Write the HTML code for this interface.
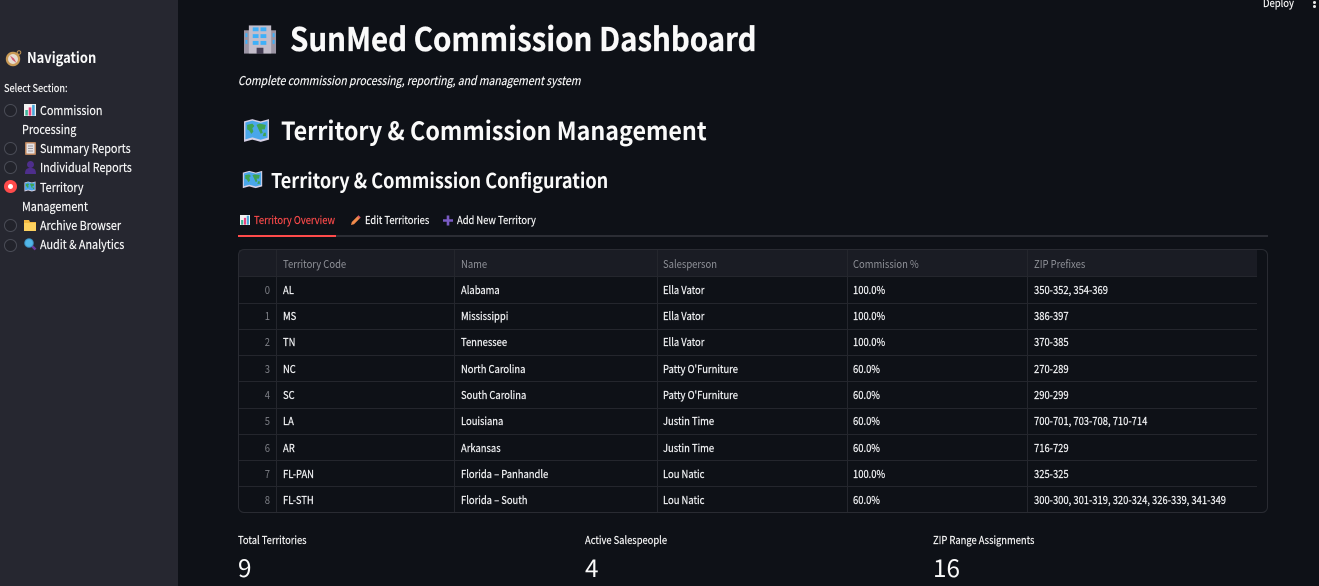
<!DOCTYPE html>
<html lang="en"><head><meta charset="utf-8"><title>SunMed Commission Dashboard</title>
<style>
*{box-sizing:border-box}
html,body{margin:0;padding:0;width:1319px;height:586px;overflow:hidden;background:#0e1117;color:#fafafa;font-family:"Noto Sans CJK JP","Liberation Sans",sans-serif}
.a{position:absolute;white-space:nowrap;line-height:1;transform-origin:left center}
.s{transform:scaleX(.86);-webkit-text-stroke:.15px currentColor}
svg{position:absolute;display:block}
#side{position:absolute;left:0;top:0;width:178px;height:586px;background:#262730}
.nav{font-size:12.400px;font-weight:400;transform:scaleX(.87);-webkit-text-stroke:.15px currentColor}
.radio{position:absolute;left:3.500px;width:13px;height:13px;border-radius:50%;border:1px solid #4a4c56;background:#22232b}
.on{background:#ff4b4b;border:0}
.on:after{content:"";position:absolute;left:4px;top:4px;width:5px;height:5px;border-radius:50%;background:#fff}
.h{font-size:11px;color:#8f9198;transform:scaleX(.86)}
.c{font-size:11px;color:#f4f5f7;transform:scaleX(.856);-webkit-text-stroke:.2px currentColor}
.i{font-size:11px;color:#7d7f86;width:30px;text-align:right;transform:scaleX(.86);transform-origin:right center}
.ln{position:absolute;background:#24262d}
</style></head><body>
<svg width="0" height="0" style="position:absolute"><defs>
<symbol id="map" viewBox="0 0 26 22" preserveAspectRatio="none"><path d="M1 3l8-2 8 2 8-2v18l-8 2-8-2-8 2z" fill="#d6d1e6"/><path d="M2.300 4l6.700-1.700 8 2 6.700-1.700v14.800l-6.700 1.700-8-2-6.700 1.700z" fill="#4aa7ea"/><path d="M4 6l5-1 2 2-2 2 1 3-2 2-2-3-2-1zM13 6l3-1 6 1-1 4-3 0 1 3-2 1-2-4zM20 13l2 0 0 3-3 0z" fill="#3fa452"/></symbol>
<symbol id="chart" viewBox="0 0 14 14"><rect width="14" height="14" fill="#f2f2f2"/><rect x="1.500" y="7" width="3" height="6.500" fill="#3fb59a"/><rect x="5.500" y="4" width="3" height="9.500" fill="#e8417f"/><rect x="9.500" y="1" width="3" height="12.500" fill="#49a6d8"/></symbol>
</defs></svg>

<div id="side">
<svg style="left:5px;top:50px" width="17" height="17" viewBox="0 0 17 17"><circle cx="8" cy="9" r="7.200" fill="#c99a55"/><circle cx="8" cy="9" r="5" fill="#e7ddd0"/><path d="M5 5.500l4 3 2.500 4.500-4-3z" fill="#d0576e"/><circle cx="14" cy="2.500" r="1.800" fill="none" stroke="#c99a55"/></svg>
<div class="a" style="left:27px;top:49px;font-size:14.600px;font-weight:700;line-height:18px;transform:scaleX(.885)">Navigation</div>
<div class="a s" style="left:3.500px;top:82px;font-size:11px;line-height:13px;transform:scaleX(.84)">Select Section:</div>

<div class="radio" style="top:104px"></div>
<svg style="left:24px;top:104px" width="12" height="12"><use href="#chart"/></svg>
<div class="a nav" style="left:40px;top:102.500px;line-height:15px">Commission</div>
<div class="a nav" style="left:21.500px;top:121.500px;line-height:15px">Processing</div>

<div class="radio" style="top:142px"></div>
<svg style="left:25px;top:142px" width="11" height="13" viewBox="0 0 11 13"><rect width="11" height="13" rx="1" fill="#b9835c"/><rect x="1.500" y="1.500" width="8" height="10" fill="#e6e3e6"/><path d="M3 4h5M3 6.500h5M3 9h5" stroke="#9a9aa3"/></svg>
<div class="a nav" style="left:40px;top:140.500px;line-height:15px">Summary Reports</div>

<div class="radio" style="top:161px"></div>
<svg style="left:24px;top:160px" width="13" height="14" viewBox="0 0 13 14"><circle cx="6.500" cy="4.500" r="3.500" fill="#4e2e8c"/><path d="M1 14c0-5 2-6 5.500-6s5.500 1 5.500 6z" fill="#4e2e8c"/></svg>
<div class="a nav" style="left:40px;top:159.500px;line-height:15px">Individual Reports</div>

<div class="radio on" style="top:180px"></div>
<svg style="left:24px;top:181px" width="12" height="11"><use href="#map"/></svg>
<div class="a nav" style="left:40px;top:179.500px;line-height:15px">Territory</div>
<div class="a nav" style="left:21.500px;top:198.500px;line-height:15px">Management</div>

<div class="radio" style="top:219px"></div>
<svg style="left:24px;top:219px" width="12" height="12" viewBox="0 0 12 12"><path d="M0 1h5l1 2h6v9H0z" fill="#f3b942"/><rect y="4" width="12" height="8" fill="#fdd25f"/></svg>
<div class="a nav" style="left:40px;top:217.500px;line-height:15px">Archive Browser</div>

<div class="radio" style="top:239px"></div>
<svg style="left:24px;top:238px" width="13" height="13" viewBox="0 0 13 13"><path d="M7.500 7.500l4 4" stroke="#6a3c9c" stroke-width="2.600"/><circle cx="5" cy="5" r="4.300" fill="#52b7e8" stroke="#3e93c4"/></svg>
<div class="a nav" style="left:40px;top:236.500px;line-height:15px">Audit &amp; Analytics</div>
</div>

<div class="a s" style="left:1263px;top:-3px;font-size:11px;line-height:13px">Deploy</div>
<div style="position:absolute;left:1313px;top:1px;width:3px;height:3px;background:#e8e8e8;border-radius:50%"></div>
<div style="position:absolute;left:1313px;top:5px;width:3px;height:3px;background:#e8e8e8;border-radius:50%"></div>

<svg style="left:244px;top:24px" width="33" height="31" viewBox="0 0 34 31"><rect x="0" y="6" width="33" height="24" fill="#9b95a4"/><rect x="5" y="1" width="23" height="29" fill="#c3bdca"/><g fill="#3fb0f8"><rect x="9" y="3" width="6" height="4"/><rect x="17" y="3" width="6" height="4"/><rect x="9" y="10" width="6" height="4"/><rect x="17" y="10" width="6" height="4"/><rect x="9" y="17" width="6" height="4"/><rect x="17" y="17" width="6" height="4"/><rect x="1.500" y="9" width="2" height="4"/><rect x="1.500" y="16" width="2" height="4"/><rect x="29.500" y="9" width="2" height="4"/><rect x="29.500" y="16" width="2" height="4"/></g><rect x="13" y="24" width="7" height="6" fill="#463f55"/></svg>
<div class="a" style="left:290px;top:17px;font-size:32.400px;font-weight:700;line-height:42px;transform:scaleX(.908);-webkit-text-stroke:.3px currentColor">SunMed Commission Dashboard</div>
<div class="a" style="left:238px;top:73px;font-size:12.100px;font-style:italic;line-height:16px;transform:scaleX(.864);-webkit-text-stroke:.15px currentColor">Complete commission processing, reporting, and management system</div>

<svg style="left:243px;top:118px" width="27" height="25"><use href="#map"/></svg>
<div class="a" style="left:281px;top:113px;font-size:25.300px;font-weight:600;line-height:34px;transform:scaleX(.92)">Territory &amp; Commission Management</div>

<svg style="left:242px;top:170px" width="21" height="19"><use href="#map"/></svg>
<div class="a" style="left:271px;top:166px;font-size:20.100px;font-weight:600;line-height:27px;transform:scaleX(.9)">Territory &amp; Commission Configuration</div>

<svg style="left:240px;top:215px" width="10" height="10"><use href="#chart"/></svg>
<div class="a s" style="left:254px;top:213px;font-size:10.900px;line-height:15px;color:#ff4b4b">Territory Overview</div>
<svg style="left:350px;top:215px" width="11" height="11" viewBox="0 0 11 11"><path d="M1 10l.8-3L7.500 1.300l2.200 2.200L4 9.200z" fill="#f08a4b"/><path d="M7.500 1.300l1-1 2.200 2.200-1 1z" fill="#e8596b"/></svg>
<div class="a s" style="left:365px;top:213px;font-size:10.900px;line-height:15px">Edit Territories</div>
<svg style="left:443px;top:215px" width="10" height="11" viewBox="0 0 10 11"><path d="M5 .5v10M0 5.500h10" stroke="#7a5bc4" stroke-width="2.600"/></svg>
<div class="a s" style="left:457px;top:213px;font-size:10.900px;line-height:15px">Add New Territory</div>
<div class="ln" style="left:238px;top:235px;width:1030px;height:2px;background:#2b2d34"></div>
<div style="position:absolute;left:238px;top:235px;width:98px;height:2px;background:#ff4b4b"></div>

<div style="position:absolute;left:239px;top:250px;width:1018px;height:26px;background:#1a1c24"></div>
<div class="ln" style="left:239px;top:276px;width:1018px;height:1px"></div>
<div class="ln" style="left:239px;top:303px;width:1018px;height:1px"></div>
<div class="ln" style="left:239px;top:329px;width:1018px;height:1px"></div>
<div class="ln" style="left:239px;top:355px;width:1018px;height:1px"></div>
<div class="ln" style="left:239px;top:381px;width:1018px;height:1px"></div>
<div class="ln" style="left:239px;top:408px;width:1018px;height:1px"></div>
<div class="ln" style="left:239px;top:434px;width:1018px;height:1px"></div>
<div class="ln" style="left:239px;top:460px;width:1018px;height:1px"></div>
<div class="ln" style="left:239px;top:486px;width:1018px;height:1px"></div>
<div class="ln" style="left:276px;top:250px;width:1px;height:262px"></div>
<div class="ln" style="left:454px;top:250px;width:1px;height:262px"></div>
<div class="ln" style="left:657px;top:250px;width:1px;height:262px"></div>
<div class="ln" style="left:847px;top:250px;width:1px;height:262px"></div>
<div class="ln" style="left:1027px;top:250px;width:1px;height:262px"></div>
<div style="position:absolute;left:238px;top:249px;width:1030px;height:264px;border:1px solid #292b32;border-radius:6px"></div>

<div class="a h" style="left:283px;top:257px;line-height:14px">Territory Code</div>
<div class="a h" style="left:461px;top:257px;line-height:14px">Name</div>
<div class="a h" style="left:663px;top:257px;line-height:14px">Salesperson</div>
<div class="a h" style="left:853px;top:257px;line-height:14px">Commission %</div>
<div class="a h" style="left:1034px;top:257px;line-height:14px">ZIP Prefixes</div>

<div class="a i" style="left:240px;top:283px;line-height:14px">0</div><div class="a c" style="left:283px;top:283px;line-height:14px">AL</div><div class="a c" style="left:461px;top:283px;line-height:14px">Alabama</div><div class="a c" style="left:663px;top:283px;line-height:14px">Ella Vator</div><div class="a c" style="left:853px;top:283px;line-height:14px">100.0%</div><div class="a c" style="left:1034px;top:283px;line-height:14px">350-352, 354-369</div>
<div class="a i" style="left:240px;top:309px;line-height:14px">1</div><div class="a c" style="left:283px;top:309px;line-height:14px">MS</div><div class="a c" style="left:461px;top:309px;line-height:14px">Mississippi</div><div class="a c" style="left:663px;top:309px;line-height:14px">Ella Vator</div><div class="a c" style="left:853px;top:309px;line-height:14px">100.0%</div><div class="a c" style="left:1034px;top:309px;line-height:14px">386-397</div>
<div class="a i" style="left:240px;top:335px;line-height:14px">2</div><div class="a c" style="left:283px;top:335px;line-height:14px">TN</div><div class="a c" style="left:461px;top:335px;line-height:14px">Tennessee</div><div class="a c" style="left:663px;top:335px;line-height:14px">Ella Vator</div><div class="a c" style="left:853px;top:335px;line-height:14px">100.0%</div><div class="a c" style="left:1034px;top:335px;line-height:14px">370-385</div>
<div class="a i" style="left:240px;top:362px;line-height:14px">3</div><div class="a c" style="left:283px;top:362px;line-height:14px">NC</div><div class="a c" style="left:461px;top:362px;line-height:14px">North Carolina</div><div class="a c" style="left:663px;top:362px;line-height:14px">Patty O'Furniture</div><div class="a c" style="left:853px;top:362px;line-height:14px">60.0%</div><div class="a c" style="left:1034px;top:362px;line-height:14px">270-289</div>
<div class="a i" style="left:240px;top:388px;line-height:14px">4</div><div class="a c" style="left:283px;top:388px;line-height:14px">SC</div><div class="a c" style="left:461px;top:388px;line-height:14px">South Carolina</div><div class="a c" style="left:663px;top:388px;line-height:14px">Patty O'Furniture</div><div class="a c" style="left:853px;top:388px;line-height:14px">60.0%</div><div class="a c" style="left:1034px;top:388px;line-height:14px">290-299</div>
<div class="a i" style="left:240px;top:414px;line-height:14px">5</div><div class="a c" style="left:283px;top:414px;line-height:14px">LA</div><div class="a c" style="left:461px;top:414px;line-height:14px">Louisiana</div><div class="a c" style="left:663px;top:414px;line-height:14px">Justin Time</div><div class="a c" style="left:853px;top:414px;line-height:14px">60.0%</div><div class="a c" style="left:1034px;top:414px;line-height:14px">700-701, 703-708, 710-714</div>
<div class="a i" style="left:240px;top:441px;line-height:14px">6</div><div class="a c" style="left:283px;top:441px;line-height:14px">AR</div><div class="a c" style="left:461px;top:441px;line-height:14px">Arkansas</div><div class="a c" style="left:663px;top:441px;line-height:14px">Justin Time</div><div class="a c" style="left:853px;top:441px;line-height:14px">60.0%</div><div class="a c" style="left:1034px;top:441px;line-height:14px">716-729</div>
<div class="a i" style="left:240px;top:467px;line-height:14px">7</div><div class="a c" style="left:283px;top:467px;line-height:14px">FL-PAN</div><div class="a c" style="left:461px;top:467px;line-height:14px">Florida – Panhandle</div><div class="a c" style="left:663px;top:467px;line-height:14px">Lou Natic</div><div class="a c" style="left:853px;top:467px;line-height:14px">100.0%</div><div class="a c" style="left:1034px;top:467px;line-height:14px">325-325</div>
<div class="a i" style="left:240px;top:493px;line-height:14px">8</div><div class="a c" style="left:283px;top:493px;line-height:14px">FL-STH</div><div class="a c" style="left:461px;top:493px;line-height:14px">Florida – South</div><div class="a c" style="left:663px;top:493px;line-height:14px">Lou Natic</div><div class="a c" style="left:853px;top:493px;line-height:14px">60.0%</div><div class="a c" style="left:1034px;top:493px;line-height:14px">300-300, 301-319, 320-324, 326-339, 341-349</div>

<div class="a s" style="left:238px;top:533px;font-size:10.900px;line-height:14px">Total Territories</div>
<div class="a s" style="left:585px;top:533px;font-size:10.900px;line-height:14px">Active Salespeople</div>
<div class="a s" style="left:933px;top:533px;font-size:10.900px;line-height:14px">ZIP Range Assignments</div>
<div class="a" style="left:238px;top:550px;font-size:24.300px;line-height:34px">9</div>
<div class="a" style="left:585px;top:550px;font-size:24.300px;line-height:34px">4</div>
<div class="a" style="left:933px;top:550px;font-size:24.300px;line-height:34px">16</div>
</body></html>
